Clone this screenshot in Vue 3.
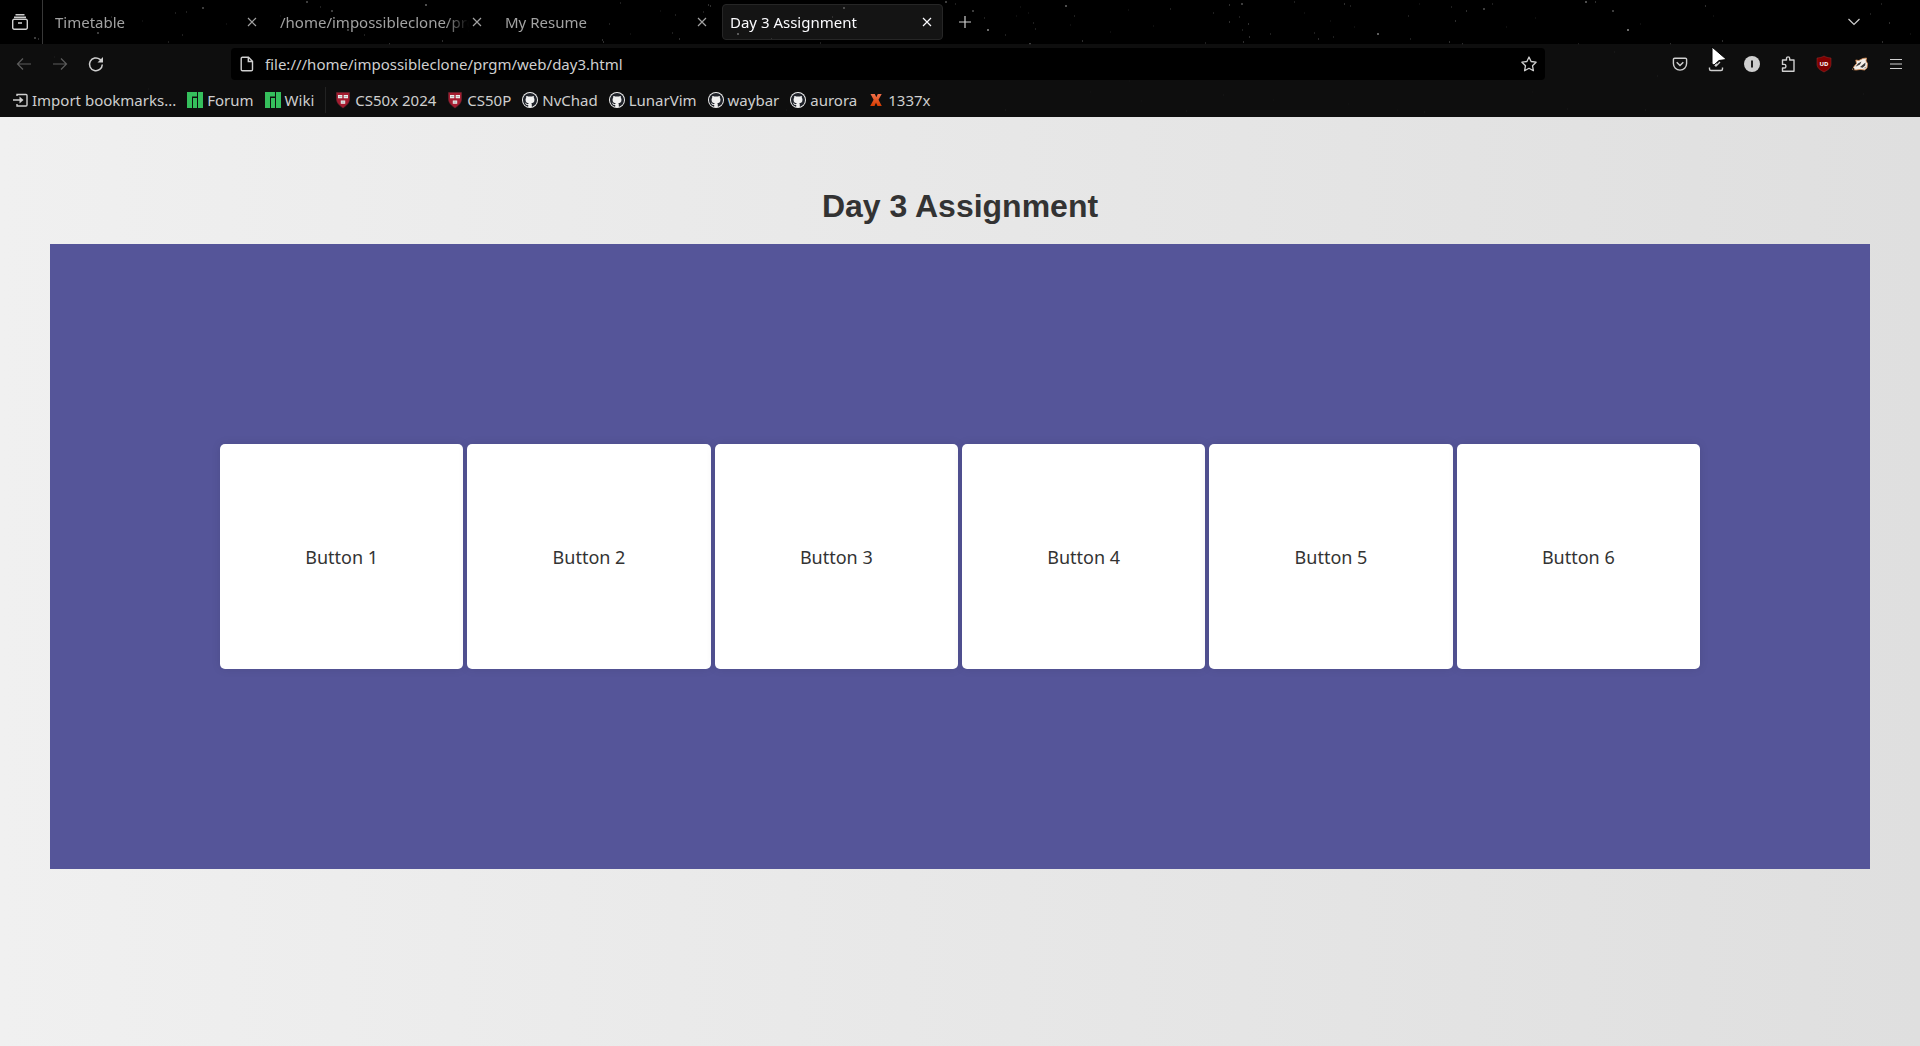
<script setup>
import { ref } from 'vue'

const tabs = ref([
  { title: 'Timetable' },
  { title: '/home/impossibleclone/prgm' },
  { title: 'My Resume' },
  { title: 'Day 3 Assignment', active: true },
])
const address = ref('file:///home/impossibleclone/prgm/web/day3.html')
const bookmarks = [
  { icon: 'manjaro', label: 'Forum' },
  { icon: 'manjaro', label: 'Wiki' },
  { icon: 'divider' },
  { icon: 'harvard', label: 'CS50x 2024' },
  { icon: 'harvard', label: 'CS50P' },
  { icon: 'github', label: 'NvChad' },
  { icon: 'github', label: 'LunarVim' },
  { icon: 'github', label: 'waybar' },
  { icon: 'github', label: 'aurora' },
  { icon: 'x', label: '1337x' },
]
const buttons = [1, 2, 3, 4, 5, 6]

// Night-sky theme: x, y, brightness
const stars = [
  [202, 7, 4], [175, 12, 2], [186, 11, 2], [111, 16, 2], [97, 32, 4], [34, 37, 4], [38, 38, 3], [142, 20, 1],
  [168, 41, 2], [182, 34, 2], [226, 23, 1], [306, 1, 4], [331, 10, 4], [320, 6, 2], [347, 29, 4], [425, 4, 5],
  [389, 43, 3], [442, 40, 3], [54, 56, 3], [148, 88, 2], [364, 34, 2], [408, 20, 1], [280, 15, 1],
  [620, 2, 2], [708, 4, 3], [710, 5, 3], [703, 11, 2], [660, 10, 1], [675, 14, 2], [609, 23, 2], [602, 39, 3],
  [603, 41, 3], [630, 33, 1], [672, 32, 2], [679, 38, 3], [737, 33, 5], [771, 38, 2], [843, 7, 4], [832, 16, 2],
  [856, 23, 2], [945, 1, 4], [955, 3, 2], [972, 10, 4], [987, 29, 7], [984, 17, 2], [820, 42, 2],
  [1065, 5, 5], [1020, 6, 1], [1028, 12, 1], [1016, 15, 1], [1074, 15, 2], [1033, 22, 2], [1035, 28, 2],
  [1070, 24, 1], [1005, 34, 2], [1082, 40, 3], [1029, 43, 4], [1110, 31, 1], [1128, 9, 1], [1153, 25, 1],
  [1170, 8, 2], [1229, 4, 3], [1241, 3, 4], [1213, 12, 2], [1229, 21, 3], [1239, 16, 2], [1248, 23, 3],
  [1242, 29, 2], [1249, 36, 3], [1243, 41, 3], [1270, 33, 2], [1205, 42, 2], [1294, 1, 2], [1304, 12, 1],
  [1344, 3, 3], [1350, 5, 2], [1330, 20, 1], [1314, 32, 2], [1318, 38, 3], [1333, 36, 2], [1354, 26, 1],
  [1377, 33, 6], [1408, 15, 2], [1410, 38, 2], [1419, 3, 1], [1451, 6, 2], [1466, 10, 3], [1483, 8, 4],
  [1455, 20, 3], [1449, 41, 3], [1462, 43, 3], [1492, 3, 2], [1585, 1, 5], [1595, 1, 3], [1612, 10, 4],
  [1627, 29, 7], [1705, 5, 3], [1535, 17, 1], [1506, 26, 1], [1578, 43, 2], [1670, 43, 3], [1722, 40, 3],
  [1713, 15, 1], [1640, 23, 1], [1881, 3, 2], [1889, 22, 3], [1882, 41, 3], [1870, 13, 2], [1910, 33, 1],
  [1614, 51, 3], [1657, 75, 3], [1645, 109, 3], [1567, 108, 2], [1532, 91, 1], [1826, 110, 2], [1863, 93, 2],
  [1223, 94, 2], [1186, 110, 2], [1273, 99, 1], [1424, 111, 2], [1348, 103, 1], [1141, 100, 1], [1005, 109, 3],
  [1090, 91, 1], [1129, 80, 1], [1397, 109, 1], [786, 109, 2], [904, 90, 2], [916, 109, 1],
]
</script>

<template>
  <div class="window">
    <header class="chrome">
      <svg class="stars" aria-hidden="true">
        <rect v-for="([x, y, b], i) in stars" :key="i" :x="x" :y="y" :width="b > 3 ? 2 : 1" height="2" fill="#fff" :opacity="b * 0.06" />
      </svg>

      <div class="tabstrip">
        <button class="view-button" aria-label="Firefox View">
          <svg class="icon" viewBox="0 0 16 16"><path stroke-width="1.400" d="M3.500.8h9M2 3.200h12M2.200 5.200h11.600a1.500 1.500 0 0 1 1.500 1.500v7a1.500 1.500 0 0 1-1.500 1.500H2.200a1.500 1.500 0 0 1-1.500-1.500v-7a1.500 1.500 0 0 1 1.500-1.500zM6 9h4" /></svg>
        </button>
        <div class="tabs">
          <div v-for="tab in tabs" :key="tab.title" class="tab" :class="{ active: tab.active }">
            <button class="tab-title">{{ tab.title }}</button>
            <button class="tab-close" :aria-label="'Close ' + tab.title">
              <svg class="icon" viewBox="0 0 16 16"><path d="M4 4l8 8M12 4l-8 8" /></svg>
            </button>
          </div>
        </div>
        <button class="tool" aria-label="New tab">
          <svg class="icon" viewBox="0 0 16 16"><path d="M8 2v12M2 8h12" /></svg>
        </button>
        <button class="tool all-tabs" aria-label="List all tabs">
          <svg class="icon" viewBox="0 0 16 16"><path d="M2.500 5l5.500 5.500L13.500 5" /></svg>
        </button>
      </div>

      <div class="navbar">
        <div class="tools">
          <button class="tool" disabled aria-label="Back">
            <svg class="icon" viewBox="0 0 16 16"><path d="M15 8H1.500M7 2.500L1.500 8 7 13.500" /></svg>
          </button>
          <button class="tool" disabled aria-label="Forward">
            <svg class="icon" viewBox="0 0 16 16"><path d="M1 8h13.500M9 2.500L14.500 8 9 13.500" /></svg>
          </button>
          <button class="tool" aria-label="Reload">
            <svg class="icon" viewBox="0 0 16 16"><path stroke-width="1.500" d="M14.300 8.500A6.400 6.400 0 1 1 12 3.400l1.500 1.500" /><path class="solid" d="M15 1v5.500H9.500z" /></svg>
          </button>
        </div>

        <div class="urlbar">
          <svg class="icon" viewBox="0 0 16 16"><path stroke-width="1.400" d="M3.500 1.200h6l4 4v8.300a1.300 1.300 0 0 1-1.300 1.300H3.500a1.300 1.300 0 0 1-1.300-1.300v-11a1.300 1.300 0 0 1 1.300-1.300zM9.300 1.500v4h4" /></svg>
          <input v-model="address" type="text" aria-label="Address" spellcheck="false" />
          <button class="star" aria-label="Bookmark this page">
            <svg class="icon" viewBox="0 0 16 16"><path stroke-width="1.300" stroke-linejoin="round" d="M8 1l2.100 4.500 5 .7-3.600 3.500.9 5L8 12.300l-4.400 2.400.9-5L.9 6.200l5-.7z" /></svg>
          </button>
        </div>

        <div class="tools">
          <button class="tool" aria-label="Save to Pocket">
            <svg class="icon" viewBox="0 0 16 16"><path stroke-width="1.400" stroke-linejoin="round" d="M2.700 2.200h10.600a1.300 1.300 0 0 1 1.300 1.300V7.500a6.600 6.600 0 0 1-13.200 0V3.500a1.300 1.300 0 0 1 1.300-1.300z" /><path stroke-width="1.500" d="M4.700 6.300L8 9.500l3.300-3.200" /></svg>
          </button>
          <button class="tool" aria-label="Downloads">
            <svg class="icon" viewBox="0 0 16 16"><path stroke-width="1.400" d="M8 1v8.500M4 6l4 4 4-4M1.500 11.500v1.500a1.500 1.500 0 0 0 1.500 1.500h10a1.500 1.500 0 0 0 1.500-1.500v-1.500" /></svg>
            <svg class="cursor" viewBox="0 0 18 24" aria-hidden="true"><path d="M2 1L16.500 13.500 9 14.500 4 19 2 18z" /></svg>
          </button>
          <button class="tool" aria-label="Password manager">
            <svg class="icon" viewBox="0 0 16 16"><circle class="solid" cx="8" cy="8" r="8" /><rect x="7" y="4.500" width="2" height="7" fill="#222" stroke="none" /></svg>
          </button>
          <button class="tool" aria-label="Extensions">
            <svg class="icon" viewBox="0 0 16 16"><path stroke-width="1.400" stroke-linejoin="round" d="M2.500 7V4h4V2.500a1.600 1.600 0 0 1 3.200 0V4H14v11.200H2.500V12h1.800a1.600 1.600 0 0 0 1.600-1.600V10a1.600 1.600 0 0 0-1.600-1.600H2.500z" /></svg>
          </button>
          <button class="tool" aria-label="uBlock Origin">
            <svg class="icon" viewBox="0 0 16 16"><path d="M8 0c2 1.200 4 1.700 7 2v6c0 4-3 6-7 8-4-2-7-4-7-8V2c3-.3 5-.8 7-2z" fill="#800000" stroke="#933" stroke-width=".5" /><text x="8" y="10" text-anchor="middle" class="shield-text">UD</text></svg>
          </button>
          <button class="tool" aria-label="Privacy Badger">
            <svg class="icon" viewBox="0 0 16 16"><path d="M.5 13.500L2 10.500 4.500 7.500 3.800 4l3 .5 4-2 3.700-.5-.5 3 1.500 2.500-.5 4.500-2.500 2-4-.6-4.500.6z" fill="#f4efe9" stroke="#d98d52" stroke-width=".8" /><path d="M3.500 10.800L6 7.500l3.500-2L8 8.500zM8 11l5.500-4.500-.3 3-2.700 2.200z" fill="#3a3a3a" stroke="none" /><path d="M11 12.800l2.500-2 .8 1z" fill="#999" stroke="none" /><circle cx="1.500" cy="13" r=".9" fill="#111" stroke="none" /></svg>
          </button>
          <button class="tool" aria-label="Open menu">
            <svg class="icon" viewBox="0 0 16 16"><path stroke-width="1.200" d="M2 3.500h12M2 8h12M2 12.500h12" /></svg>
          </button>
        </div>
      </div>

      <nav class="bookmarks" aria-label="Bookmarks">
        <a class="bookmark" href="#">
          <svg class="icon" viewBox="0 0 16 16"><path stroke-width="1.400" d="M5 4V2.500h9a1 1 0 0 1 1 1v9.500a1 1 0 0 1-1 1H5V12M1 8h9" /><path class="solid" d="M7.500 4.500L11.500 8l-4 3.500z" /></svg>
          Import bookmarks...
        </a>
        <template v-for="(mark, i) in bookmarks" :key="i">
          <span v-if="mark.icon === 'divider'" class="divider"></span>
          <a v-else class="bookmark" href="#">
            <svg v-if="mark.icon === 'manjaro'" class="icon" viewBox="0 0 16 16"><path d="M0 0h10v4.500H5V16H0zM6 6h4v10H6zM11 0h5v16h-5z" fill="#35bf5c" stroke="none" /></svg>
            <svg v-else-if="mark.icon === 'harvard'" class="icon" viewBox="0 0 16 16"><path d="M1.500.5h13V7c0 4-3 6.500-6.500 9C4.500 13.500 1.500 11 1.500 7z" fill="#a51c30" stroke="#6b2530" stroke-width=".6" /><path d="M3 3h4.300v3.200H3zM8.700 3H13v3.200H8.700zM5.800 8.500h4.400v3.200H5.800z" fill="#eee" stroke="none" /><path d="M3.700 4.600h3M9.400 4.600h3M6.500 10.100h3" stroke="#999" stroke-width=".8" /></svg>
            <svg v-else-if="mark.icon === 'github'" class="icon" viewBox="0 0 16 16"><circle cx="8" cy="8" r="8" fill="#f0f0f0" stroke="none" /><path transform="translate(1 1) scale(.875)" fill="#20232a" stroke="none" d="M8 0c4.420 0 8 3.580 8 8a8.013 8.013 0 0 1-5.450 7.590c-.4.080-.55-.17-.55-.38 0-.27.010-1.130.010-2.200 0-.75-.25-1.230-.54-1.480 1.780-.2 3.650-.88 3.650-3.950 0-.88-.31-1.590-.82-2.150.080-.2.360-1.020-.080-2.120 0 0-.67-.22-2.200.82-.64-.18-1.320-.27-2-.27-.68 0-1.360.090-2 .27-1.530-1.030-2.200-.82-2.200-.82-.44 1.100-.16 1.920-.080 2.120-.51.56-.82 1.280-.82 2.150 0 3.060 1.860 3.750 3.640 3.950-.23.2-.44.55-.51 1.070-.46.21-1.610.55-2.330-.66-.15-.24-.6-.83-1.230-.82-.67.010-.27.38.010.53.34.19.73.9.82 1.130.16.45.68 1.310 2.690.94 0 .67.010 1.300.010 1.490 0 .21-.15.45-.55.38A7.995 7.995 0 0 1 0 8c0-4.420 3.580-8 8-8Z" /></svg>
            <svg v-else class="icon" viewBox="0 0 16 16"><defs><linearGradient id="flame" x1="0" y1="0" x2="0" y2="1"><stop offset="0" stop-color="#f2704a" /><stop offset="1" stop-color="#d63c00" /></linearGradient></defs><path d="M2.500 2h4.300L8.300 5.300 9.800 2h3.900L10.500 7.800 13.800 14H9.500L8 10.700 6.500 14H2.200L5.600 7.800z" fill="url(#flame)" stroke="none" /></svg>
            {{ mark.label }}
          </a>
        </template>
      </nav>
    </header>

    <main class="page">
      <h1>Day 3 Assignment</h1>
      <section class="panel">
        <button v-for="n in buttons" :key="n" class="card">Button {{ n }}</button>
      </section>
    </main>
  </div>
</template>

<style>
body {
  margin: 0;
}
</style>

<style scoped>
.window {
  display: flex;
  flex-direction: column;
  min-height: 100vh;
  font-family: "Noto Sans", sans-serif;
}

button,
input {
  margin: 0;
  padding: 0;
  border: 0;
  background: none;
  color: inherit;
  font: inherit;
}

.chrome {
  position: relative;
  background: #000;
  color: #cfcfcf;
  font-size: 15px;
}

.stars {
  position: absolute;
  inset: 0;
  width: 100%;
  height: 100%;
}

.icon {
  display: block;
  flex: none;
  width: 16px;
  height: 16px;
  fill: none;
  stroke: currentColor;
  stroke-width: 1.2;
  overflow: visible;
}

.icon .solid {
  fill: currentColor;
  stroke: none;
}

.tabstrip {
  position: relative;
  display: flex;
  align-items: center;
  height: 44px;
}

.view-button {
  display: flex;
  align-items: center;
  width: 43px;
  height: 100%;
  padding-left: 12px;
  border-right: 1px solid #383838;
  box-sizing: border-box;
}

.tabs {
  display: flex;
  gap: 4px;
  padding: 0 4px;
}

.tab {
  display: flex;
  align-items: center;
  box-sizing: border-box;
  width: 221px;
  height: 36px;
  padding: 0 7px;
  border: 1px solid transparent;
  border-radius: 4px;
  color: #a2a2a2;
}

.tab.active {
  background: rgba(255, 255, 255, 0.08);
  border-color: #262626;
  color: #fbfbfe;
}

.tab-title {
  flex: 1;
  min-width: 0;
  overflow: hidden;
  text-align: left;
  white-space: nowrap;
  mask-image: linear-gradient(to left, transparent, #000 24px);
}

.tool {
  position: relative;
  display: grid;
  place-items: center;
  width: 36px;
  height: 36px;
}

.tool:disabled {
  opacity: 0.4;
}

.all-tabs {
  margin-left: auto;
  margin-right: 48px;
}

.navbar {
  position: relative;
  display: flex;
  align-items: center;
  gap: 117px;
  height: 40px;
  padding: 0 6px;
  background: rgba(18, 18, 18, 0.8);
}

.tools {
  display: flex;
}

.urlbar {
  display: flex;
  flex: 1;
  align-items: center;
  gap: 10px;
  height: 32px;
  padding: 0 8px;
  border-radius: 4px;
  background: #000;
}

.urlbar input {
  flex: 1;
  min-width: 0;
  outline: none;
}

.cursor {
  position: absolute;
  left: 12px;
  top: 0;
  width: 18px;
  height: 24px;
  fill: #fff;
  stroke: #000;
}

.shield-text {
  fill: #fff;
  stroke: none;
  font: bold 6px "Noto Sans", sans-serif;
}

.bookmarks {
  position: relative;
  display: flex;
  align-items: center;
  gap: 11px;
  height: 31px;
  padding: 0 12px 2px;
  background: rgba(18, 18, 18, 0.8);
}

.bookmark {
  display: flex;
  align-items: center;
  gap: 4px;
  color: inherit;
  text-decoration: none;
  white-space: nowrap;
}

.divider {
  width: 1px;
  height: 26px;
  margin-right: -2px;
  background: #222;
}

.page {
  flex: 1;
  padding: 71px 50px 0;
  background: linear-gradient(to right, #f0f0f0, #dfdfdf);
}

h1 {
  margin: 0 0 20px;
  color: #333;
  font: bold 32px/36px "Liberation Sans", sans-serif;
  text-align: center;
}

.panel {
  display: grid;
  grid-template-columns: repeat(6, 1fr);
  gap: 4px;
  padding: 200px 170px;
  background: #555599;
}

.card {
  height: 225px;
  border-radius: 5px;
  background: #fff;
  box-shadow: 0 0 10px rgba(0, 0, 0, 0.1);
  color: #333;
  font-size: 18px;
}
</style>
